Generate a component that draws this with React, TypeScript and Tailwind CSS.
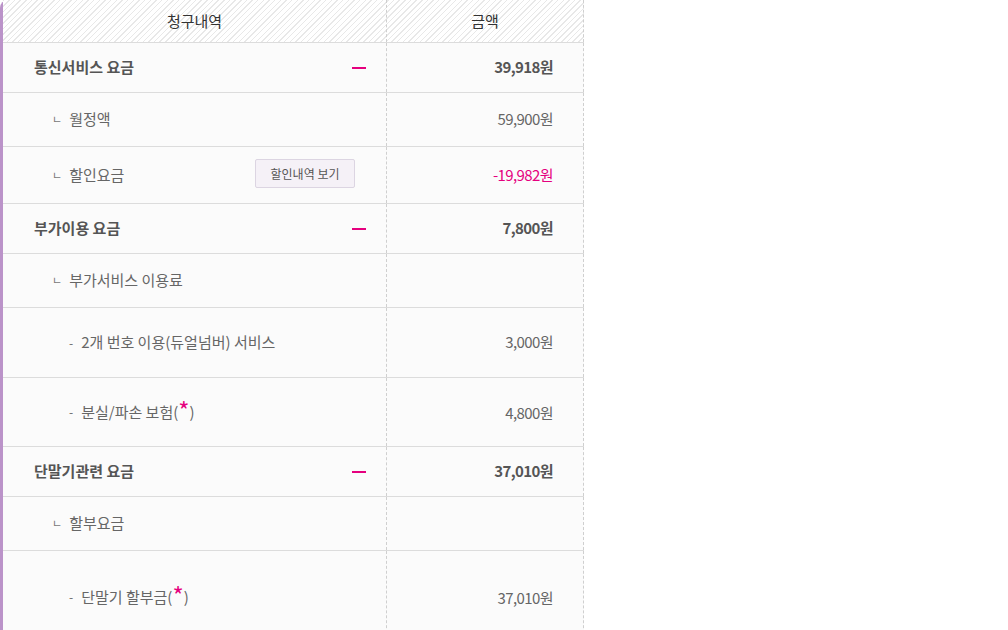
import React from 'react';

type Row =
  | { kind: 'group'; label: string; amount: string; h: string }
  | { kind: 'sub'; label: string; amount?: string; pink?: boolean; button?: boolean; h: string }
  | { kind: 'item'; label: string; star?: boolean; amount: string; h: string };

const rows: Row[] = [
  { kind: 'group', label: '통신서비스 요금', amount: '39,918원', h: 'h-[50px]' },
  { kind: 'sub', label: '월정액', amount: '59,900원', h: 'h-[54px]' },
  { kind: 'sub', label: '할인요금', amount: '-19,982원', pink: true, button: true, h: 'h-[57px]' },
  { kind: 'group', label: '부가이용 요금', amount: '7,800원', h: 'h-[50px]' },
  { kind: 'sub', label: '부가서비스 이용료', h: 'h-[54px]' },
  { kind: 'item', label: '2개 번호 이용(듀얼넘버) 서비스', amount: '3,000원', h: 'h-[70px]' },
  { kind: 'item', label: '분실/파손 보험(', star: true, amount: '4,800원', h: 'h-[69px]' },
  { kind: 'group', label: '단말기관련 요금', amount: '37,010원', h: 'h-[50px]' },
  { kind: 'sub', label: '할부요금', h: 'h-[54px]' },
  { kind: 'item', label: '단말기 할부금(', star: true, amount: '37,010원', h: 'h-[93px]' },
];

function Star() {
  return (
    <>
      <span className="relative top-[-6px] inline-block h-[15px] text-[24px] leading-[22px] text-[#e5007e]">*</span>
      <span>)</span>
    </>
  );
}

function BillRow({ row }: { row: Row }) {
  return (
    <div className={`flex border-b border-[#dcdcdc] ${row.h}`}>
      <div className="flex w-[384px] items-center border-r border-dashed border-[#cfcfcf]">
        {row.kind === 'group' && (
          <div className="flex w-full items-center justify-between pl-[31px] pr-[20px]">
            <span className="text-[15px] font-bold text-[#555]">{row.label}</span>
            <span className="block h-[2px] w-[14px] bg-[#e5007e]" />
          </div>
        )}
        {row.kind === 'sub' && (
          <div className="flex w-full items-center justify-between pl-[49px] pr-[31px]">
            <span className="flex items-center text-[15px] text-[#666]">
              <span className="mr-[7px] text-[11px] text-[#777]">ㄴ</span>
              {row.label}
            </span>
            {row.button && (
              <button className="mt-[-3px] h-[29px] w-[100px] rounded-[2px] border border-[#dcd5e2] bg-[#f5f1f7] text-[12px] text-[#555]">
                할인내역 보기
              </button>
            )}
          </div>
        )}
        {row.kind === 'item' && (
          <div className="flex items-center pl-[66px] text-[15px] text-[#666]">
            <span className="mr-[8px] text-[12px]">-</span>
            <span>{row.label}</span>
            {row.star && <Star />}
          </div>
        )}
      </div>
      <div className="flex w-[197px] items-center justify-end border-r border-dashed border-[#cfcfcf] pr-[30px]">
        {row.amount && (
          <span
            className={`text-[15px] tracking-[-0.6px] ${
              row.kind === 'group' ? 'font-bold text-[#555]' : row.kind === 'sub' && row.pink ? 'text-[#e5007e]' : 'text-[#666]'
            } ${row.kind === 'item' && row.star ? 'mt-[3px]' : ''}`}
          >
            {row.amount}
          </span>
        )}
      </div>
    </div>
  );
}

export default function App() {
  return (
    <div className="h-[630px] w-[1008px] overflow-hidden bg-white font-['Noto_Sans_CJK_KR','Noto_Sans',sans-serif]">
      <div className="w-[584px] rounded-tl-[8px] border-l-[3px] border-[#bb93c9] bg-[#fbfbfb]">
        <div className="flex h-[43px] border-b border-[#dcdcdc] bg-[repeating-linear-gradient(135deg,#e8e8e8_0,#e8e8e8_1px,#ffffff_1px,#ffffff_4px)]">
          <div className="flex w-[384px] items-center justify-center border-r border-dashed border-[#cfcfcf] text-[15px] text-[#333]">
            청구내역
          </div>
          <div className="flex w-[197px] items-center justify-center border-r border-dashed border-[#cfcfcf] text-[15px] text-[#333]">
            금액
          </div>
        </div>
        {rows.map((r, i) => (
          <BillRow key={i} row={r} />
        ))}
      </div>
    </div>
  );
}
